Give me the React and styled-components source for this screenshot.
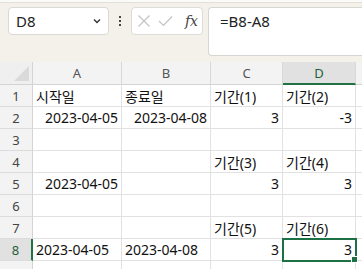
import React from 'react';
import styled, { createGlobalStyle } from 'styled-components';

const GlobalStyle = createGlobalStyle`
  html, body {
    margin: 0;
    padding: 0;
    background: #ffffff;
    overflow: hidden;
  }
  body {
    font-family: "Noto Sans", "Noto Sans CJK KR", sans-serif;
  }
`;

const Page = styled.div`
  width: 362px;
  height: 269px;
  display: flex;
  flex-direction: column;
  overflow: hidden;

  & > * {
    flex-shrink: 0;
  }
`;

const TopStrip = styled.div`
  height: 2px;
  background: #fafaf8;
  border-bottom: 1px solid #e2e0d8;
`;

const FormulaBar = styled.div`
  height: 59px;
  background: #f3f1e9;
  display: flex;
  align-items: flex-start;
  padding: 4px 0 0 8px;
  box-sizing: border-box;
`;

const NameBox = styled.div`
  width: 101px;
  height: 28px;
  box-sizing: border-box;
  background: #fff;
  border: 1px solid #d9d9d6;
  border-radius: 4px;
  display: flex;
  align-items: center;
  justify-content: space-between;
  padding: 0 6px 0 7px;
  font-size: 15px;
  color: #222;
`;

const Dots = styled.div`
  width: 22px;
  height: 28px;
  display: flex;
  flex-direction: column;
  align-items: center;
  justify-content: center;
  gap: 2px;

  span {
    width: 2px;
    height: 2px;
    background: #444;
  }
`;

const FxBox = styled.div`
  width: 72px;
  height: 28px;
  box-sizing: border-box;
  background: #fff;
  border: 1px solid #dcdcd8;
  border-radius: 4px;
  display: flex;
  align-items: center;
  padding: 0 4px 0 5px;
  gap: 7px;
`;

const Fx = styled.span`
  font-family: "DejaVu Serif", "Liberation Serif", serif;
  font-style: italic;
  font-size: 14px;
  color: #444;
  margin-left: auto;
`;

const FormulaInput = styled.div`
  flex: 1;
  height: 49px;
  margin-left: 5px;
  box-sizing: border-box;
  background: #fff;
  border: 1px solid #d6d6d2;
  border-right: none;
  border-radius: 4px 0 0 4px;
  padding: 3px 0 0 11px;
  font-size: 15px;
  color: #222;
`;

const Grid = styled.div`
  display: grid;
  grid-template-columns: 33px 89px 89px 72px 73px 1fr;
  grid-auto-rows: 22px;
  grid-template-rows: 23px;
`;

const Corner = styled.div`
  position: relative;
  background: #efefef;
  border-right: 1px solid #d4d4d4;
  border-bottom: 1px solid #d4d4d4;

  &::after {
    content: '';
    position: absolute;
    right: 3px;
    bottom: 3px;
    width: 0;
    height: 0;
    border-left: 15px solid transparent;
    border-bottom: 15px solid #dadada;
  }
`;

const ColHead = styled.div`
  background: ${p => (p.$active ? '#e1e1e1' : '#f3f3f3')};
  border-right: 1px solid #d8d8d8;
  border-bottom: ${p => (p.$active ? '2px solid #217346' : '1px solid #d4d4d4')};
  display: flex;
  align-items: center;
  justify-content: center;
  font-size: 13px;
  color: ${p => (p.$active ? '#1f5f3a' : '#555')};
  box-sizing: border-box;
`;

const RowHead = styled.div`
  background: ${p => (p.$active ? '#e1e1e1' : '#f3f3f3')};
  border-right: ${p => (p.$active ? '2px solid #217346' : '1px solid #d4d4d4')};
  border-bottom: 1px solid #dcdcdc;
  display: flex;
  align-items: center;
  justify-content: center;
  font-size: 13px;
  color: ${p => (p.$active ? '#1f5f3a' : '#444')};
  box-sizing: border-box;
`;

const Cell = styled.div`
  position: relative;
  border-right: 1px solid #e1e1e1;
  border-bottom: 1px solid #e1e1e1;
  display: flex;
  align-items: center;
  justify-content: ${p => (p.$right ? 'flex-end' : 'flex-start')};
  padding: 0 3px;
  font-size: 14px;
  color: #111;
  white-space: nowrap;
  overflow: visible;
  box-sizing: border-box;
  ${p => p.$selected && `
    outline: 2px solid #1e7145;
    outline-offset: -1px;
    z-index: 1;
    &::after {
      content: '';
      position: absolute;
      right: -3px;
      bottom: -3px;
      width: 5px;
      height: 5px;
      background: #1e7145;
      border: 1px solid #fff;
    }
  `}
`;

const Chevron = () => (
  <svg width="10" height="10" viewBox="0 0 10 10">
    <path d="M2 3.5 L5 6.5 L8 3.5" fill="none" stroke="#333" strokeWidth="1.4" />
  </svg>
);

const Cross = () => (
  <svg width="14" height="14" viewBox="0 0 14 14">
    <path d="M1.5 1.5 L12.5 12.5 M12.5 1.5 L1.5 12.5" stroke="#c4c4c4" strokeWidth="1.2" />
  </svg>
);

const Check = () => (
  <svg width="15" height="14" viewBox="0 0 15 14">
    <path d="M1 7 L5.5 11.5 L14 2.5" fill="none" stroke="#c4c4c4" strokeWidth="1.2" />
  </svg>
);

const cols = ['A', 'B', 'C', 'D', ''];

const rows = [
  [{ t: '시작일' }, { t: '종료일' }, { t: '기간(1)' }, { t: '기간(2)' }],
  [{ t: '2023-04-05', r: true }, { t: '2023-04-08', r: true }, { t: '3', r: true }, { t: '-3', r: true }],
  [],
  [{}, {}, { t: '기간(3)' }, { t: '기간(4)' }],
  [{ t: '2023-04-05', r: true }, {}, { t: '3', r: true }, { t: '3', r: true }],
  [],
  [{}, {}, { t: '기간(5)' }, { t: '기간(6)' }],
  [{ t: '2023-04-05' }, { t: '2023-04-08' }, { t: '3', r: true }, { t: '3', r: true, sel: true }],
  [],
];

export default function App() {
  return (
    <Page>
      <GlobalStyle />
      <TopStrip />
      <FormulaBar>
        <NameBox>
          <span>D8</span>
          <Chevron />
        </NameBox>
        <Dots>
          <span />
          <span />
          <span />
        </Dots>
        <FxBox>
          <Cross />
          <Check />
          <Fx>fx</Fx>
        </FxBox>
        <FormulaInput>=B8-A8</FormulaInput>
      </FormulaBar>
      <Grid>
        <Corner />
        {cols.map((c, i) => (
          <ColHead key={i} $active={c === 'D'}>{c}</ColHead>
        ))}
        {rows.map((row, ri) => (
          <React.Fragment key={ri}>
            <RowHead $active={ri === 7}>{ri < 8 ? ri + 1 : ''}</RowHead>
            {[0, 1, 2, 3, 4].map(ci => {
              const cell = row[ci] || {};
              return (
                <Cell key={ci} $right={cell.r} $selected={cell.sel}>
                  {cell.t}
                </Cell>
              );
            })}
          </React.Fragment>
        ))}
      </Grid>
    </Page>
  );
}
